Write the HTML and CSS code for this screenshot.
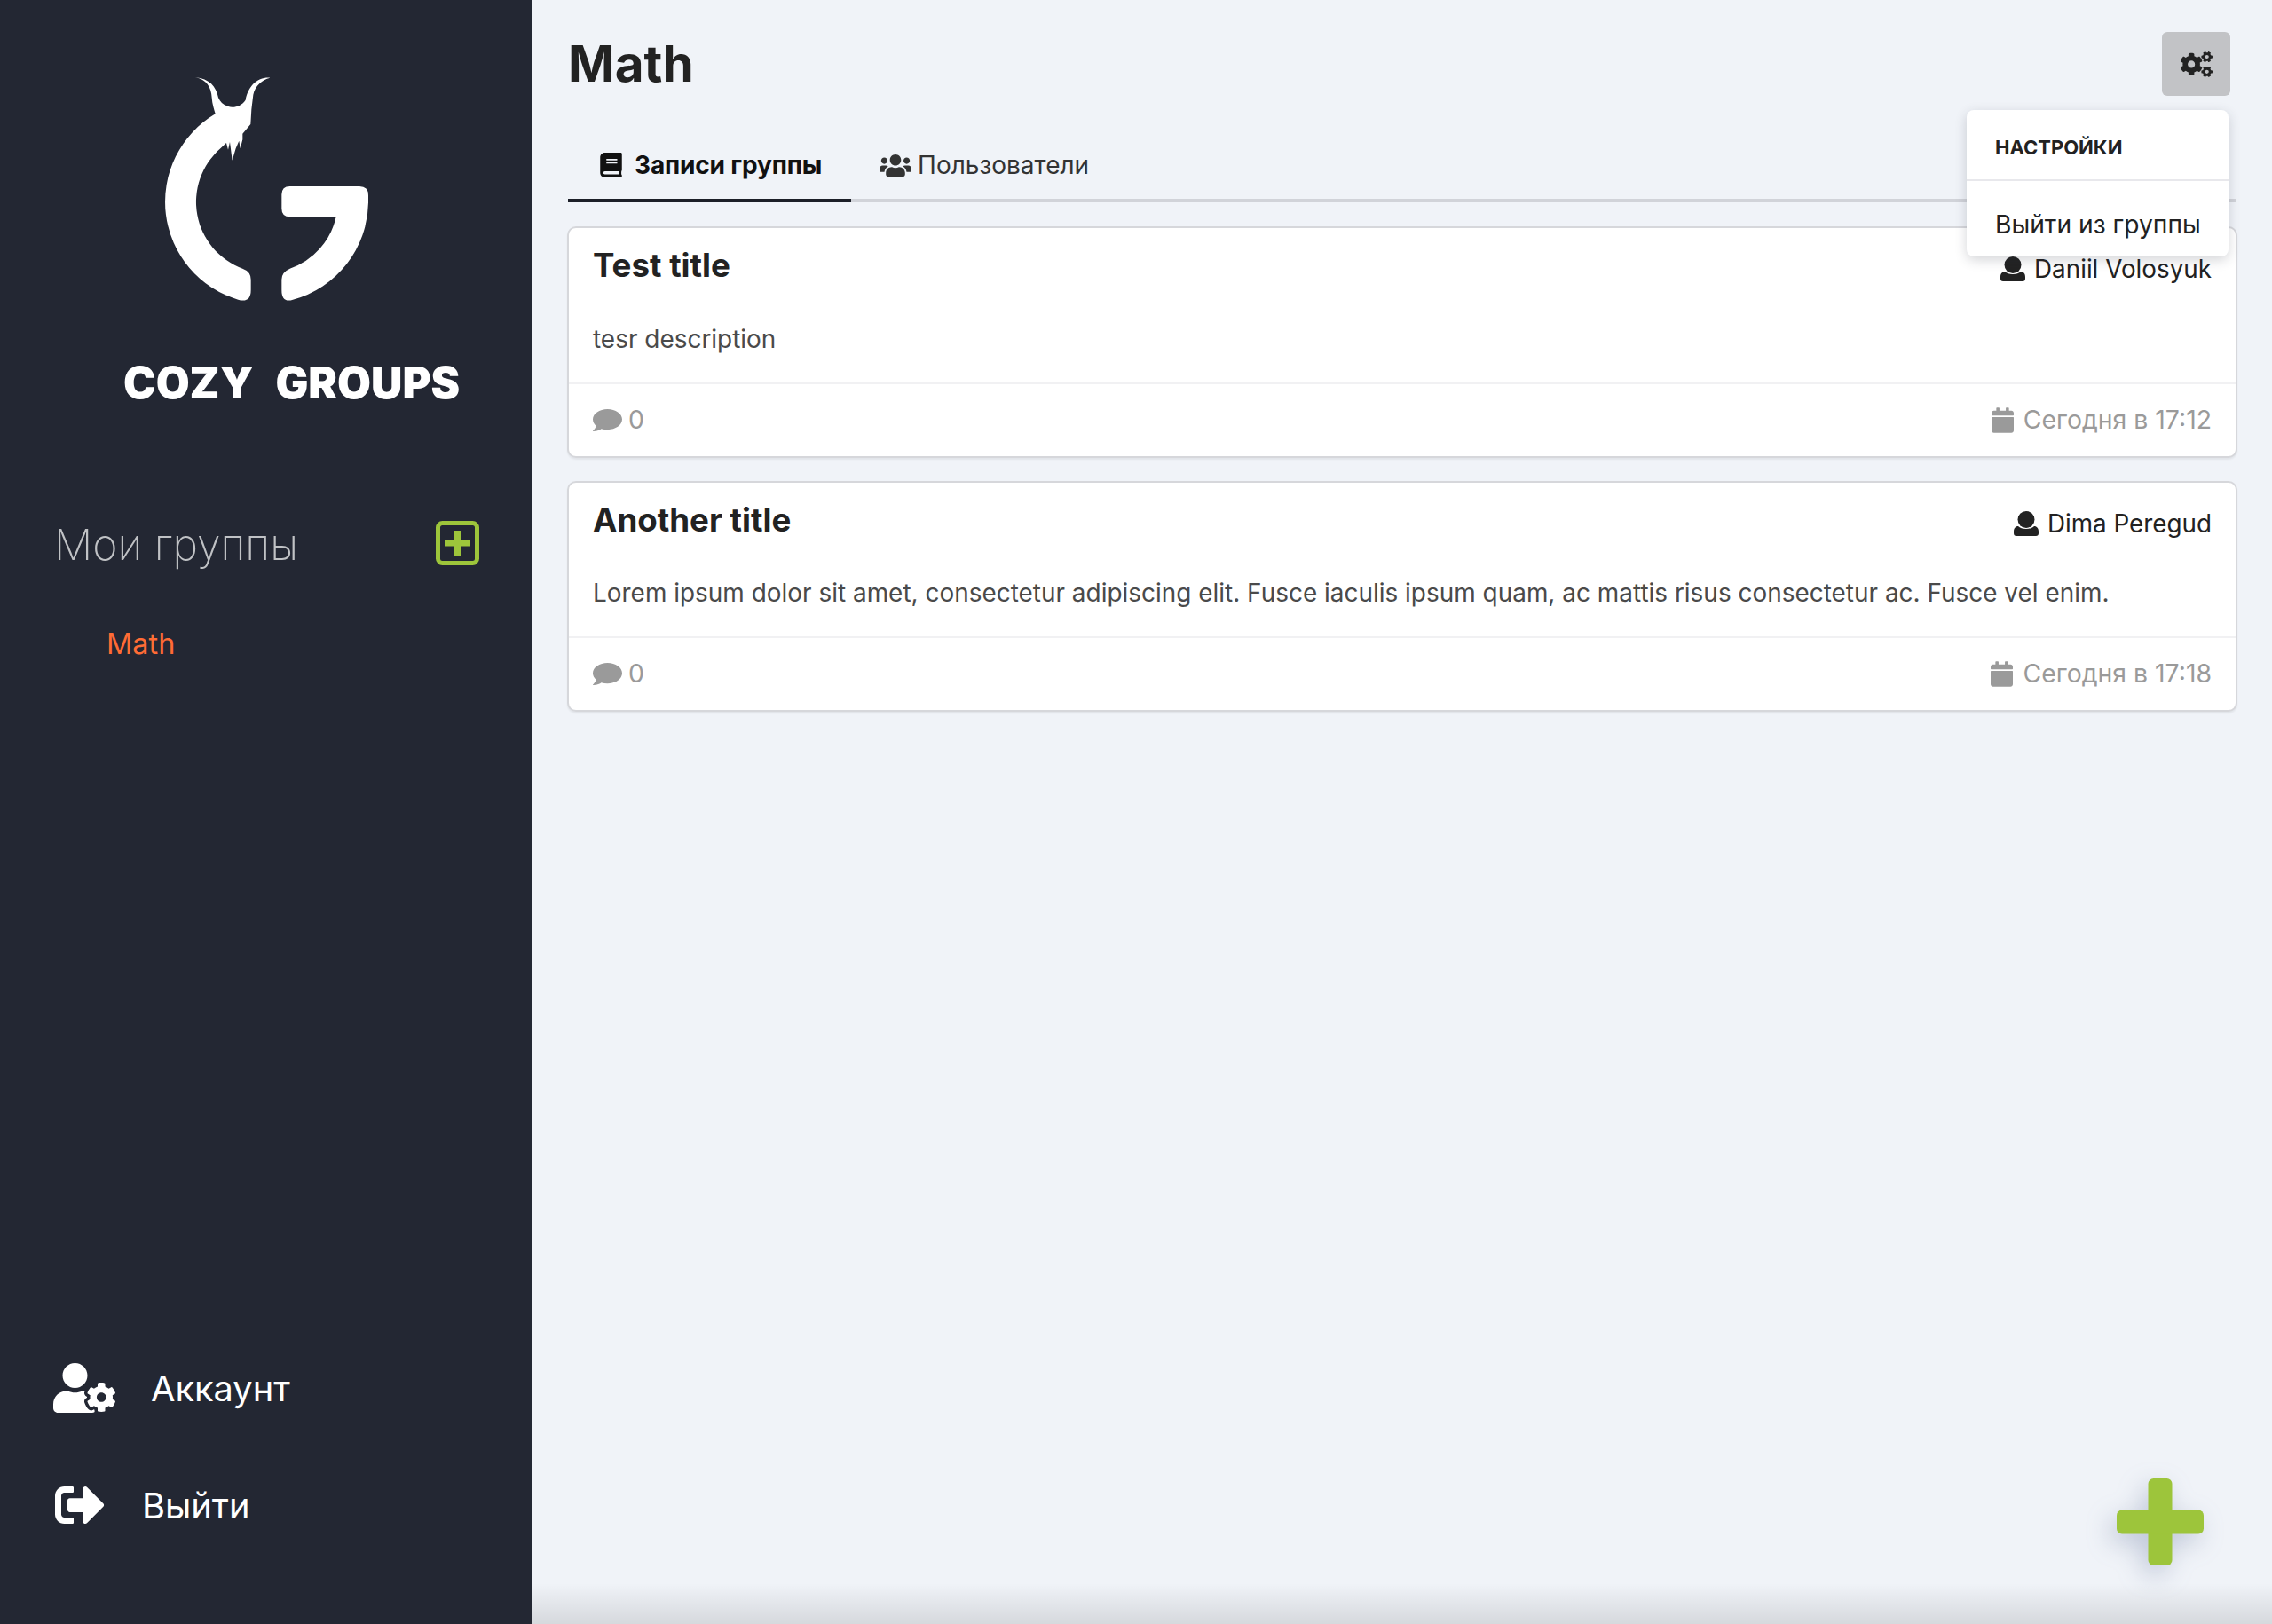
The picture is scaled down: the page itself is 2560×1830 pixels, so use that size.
FILE: index.html
```html
<!DOCTYPE html>
<html lang="ru">
<head>
<meta charset="utf-8">
<title>Cozy Groups</title>
<link rel="stylesheet" href="styles.css">
</head>
<body>
<div class="app">
  <aside class="sidebar">
    <svg class="logo-mark" viewBox="0 0 1440 900" aria-hidden="true">
      <path fill="#fff" d="M360 82C398 88 414 115 416 150C417 172 424 190 428 205A345 345 0 0 0 505 833Q548 845 548 800L548 765Q548 738 520 728A240 240 0 0 1 445 322L465 303L471 326L477 300L485 362L497 322L508 296L512 322L520 292L520 272L547 240L550 190L556 140C562 110 585 90 613 83C570 80 540 110 530 158C518 176 498 183 484 182C462 180 446 170 438 150C430 112 408 86 360 82Z"/>
      <path fill="#fff" d="M680 450L915 450Q945 450 945 480L945 505A345 345 0 0 1 690 833Q652 845 652 800L652 765Q652 740 680 728A240 240 0 0 0 836 553L680 553Q652 553 652 525L652 478Q652 450 680 450Z"/>
    </svg>
    <div class="logo-text">COZY GROUPS</div>
    <div class="groups-head">
      <span class="groups-title">Мои группы</span>
      <svg class="groups-add" viewBox="0 0 49 50" aria-hidden="true">
        <rect x="2.5" y="2.5" width="44" height="45" rx="5" fill="none" stroke="#9dc53b" stroke-width="5"/>
        <rect x="10" y="21.500" width="29" height="7" fill="#9dc53b"/>
        <rect x="21" y="11" width="7" height="28" fill="#9dc53b"/>
      </svg>
    </div>
    <a class="group-link">Math</a>
    <nav class="side-nav">
      <a class="side-link">
        <svg class="side-icon side-icon--account" viewBox="0 0 640 512" aria-hidden="true"><path fill="#fff" d="M610.5 373.3c2.6-14.1 2.6-28.5 0-42.6l25.8-14.9c3-1.7 4.3-5.2 3.3-8.5-6.7-21.6-18.2-41.2-33.2-57.4-2.3-2.5-6-3.1-9-1.4l-25.8 14.9c-10.9-9.3-23.4-16.5-36.9-21.3v-29.8c0-3.4-2.4-6.4-5.7-7.1-22.3-5-45-4.8-66.2 0-3.3.7-5.7 3.7-5.7 7.1v29.8c-13.5 4.8-26 12-36.9 21.3l-25.8-14.9c-2.9-1.7-6.7-1.1-9 1.4-15 16.2-26.5 35.8-33.2 57.4-1 3.3.4 6.8 3.3 8.5l25.8 14.9c-2.6 14.1-2.6 28.5 0 42.6l-25.8 14.9c-3 1.7-4.3 5.2-3.3 8.5 6.7 21.6 18.2 41.1 33.2 57.4 2.3 2.5 6 3.1 9 1.4l25.8-14.9c10.9 9.3 23.4 16.5 36.9 21.3v29.8c0 3.4 2.4 6.4 5.7 7.1 22.3 5 45 4.8 66.2 0 3.3-.7 5.7-3.7 5.7-7.1v-29.8c13.5-4.8 26-12 36.9-21.3l25.8 14.9c2.9 1.7 6.7 1.1 9-1.4 15-16.2 26.5-35.8 33.2-57.4 1-3.3-.4-6.8-3.3-8.5l-25.8-14.9zM496 400.5c-26.8 0-48.5-21.8-48.5-48.5s21.8-48.5 48.5-48.5 48.5 21.8 48.5 48.5-21.7 48.5-48.5 48.5zM224 256c70.7 0 128-57.3 128-128S294.7 0 224 0 96 57.3 96 128s57.3 128 128 128zm201.2 226.5c-2.3-1.2-4.6-2.6-6.8-3.9l-7.9 4.6c-6 3.4-12.8 5.3-19.6 5.3-10.9 0-21.4-4.6-28.9-12.6-18.3-19.8-32.3-43.9-40.2-69.6-5.5-17.7 1.9-36.4 17.9-45.7l7.9-4.6c-.1-2.6-.1-5.2 0-7.8l-7.9-4.6c-16-9.2-23.4-28-17.9-45.7.9-2.9 2.2-5.8 3.2-8.7-3.8-.3-7.5-1.2-11.4-1.2h-16.7c-22.2 10.2-46.9 16-72.9 16s-50.6-5.8-72.9-16h-16.7C60.2 288 0 348.2 0 422.4V464c0 26.5 21.5 48 48 48h352c10.1 0 19.5-3.2 27.2-8.5-1.2-3.8-2-7.7-2-11.8v-9.2z"/></svg>
        <span class="side-label">Аккаунт</span>
      </a>
      <a class="side-link">
        <svg class="side-icon side-icon--logout" viewBox="0 0 512 512" aria-hidden="true"><path fill="#fff" d="M497 273L329 441c-15 15-41 4.500-41-17v-96H152c-13.300 0-24-10.700-24-24v-96c0-13.300 10.700-24 24-24h136V88c0-21.400 25.900-32 41-17l168 168c9.300 9.400 9.300 24.600 0 34zM192 436v-40c0-6.600-5.400-12-12-12H96c-17.700 0-32-14.300-32-32V160c0-17.700 14.300-32 32-32h84c6.600 0 12-5.400 12-12V76c0-6.600-5.400-12-12-12H96c-53 0-96 43-96 96v192c0 53 43 96 96 96h84c6.600 0 12-5.400 12-12z"/></svg>
        <span class="side-label">Выйти</span>
      </a>
    </nav>
  </aside>

  <main class="main">
    <header class="page-head">
      <h1 class="page-title">Math</h1>
      <button class="settings-btn" type="button" aria-label="Настройки">
        <svg class="settings-icon" viewBox="0 0 640 512" aria-hidden="true"><path fill="#222" d="M512.100 191l-8.200 14.300c-3 5.300-9.400 7.500-15.100 5.400-11.800-4.400-22.600-10.700-32.100-18.600-4.600-3.800-5.800-10.500-2.800-15.700l8.200-14.300c-6.900-8-12.300-17.300-15.900-27.400h-16.500c-6 0-11.200-4.300-12.200-10.300-2-12-2.100-24.600 0-37.100 1-6 6.200-10.400 12.200-10.400h16.500c3.600-10.100 9-19.400 15.900-27.400l-8.200-14.300c-3-5.200-1.900-11.900 2.800-15.700 9.500-7.900 20.400-14.200 32.100-18.600 5.700-2.100 12.100.1 15.100 5.400l8.200 14.300c10.500-1.900 21.200-1.900 31.700 0L552 6.300c3-5.300 9.400-7.500 15.100-5.400 11.800 4.400 22.600 10.700 32.100 18.600 4.600 3.800 5.800 10.500 2.800 15.700l-8.200 14.300c6.900 8 12.300 17.300 15.900 27.400h16.500c6 0 11.200 4.300 12.200 10.300 2 12 2.100 24.600 0 37.100-1 6-6.200 10.400-12.200 10.400h-16.500c-3.600 10.100-9 19.400-15.900 27.400l8.200 14.300c3 5.200 1.900 11.900-2.800 15.700-9.500 7.900-20.400 14.200-32.100 18.600-5.700 2.100-12.100-.1-15.100-5.400l-8.200-14.300c-10.400 1.900-21.200 1.900-31.700 0zm-10.500-58.800c38.500 29.600 82.400-14.300 52.800-52.800-38.500-29.700-82.400 14.300-52.800 52.800zM386.300 286.100l33.700 16.800c10.100 5.800 14.500 18.100 10.500 29.100-8.900 24.200-26.400 46.400-42.600 65.800-7.400 8.900-20.200 11.100-30.300 5.300l-29.100-16.800c-16 13.700-34.600 24.600-54.900 31.700v33.600c0 11.600-8.300 21.600-19.700 23.600-24.600 4.200-50.400 4.400-75.900 0-11.500-2-20-11.900-20-23.600V418c-20.300-7.200-38.900-18-54.900-31.700L74 403c-10 5.800-22.900 3.600-30.300-5.300-16.200-19.400-33.300-41.600-42.200-65.700-4-10.900.4-23.200 10.500-29.100l33.300-16.800c-3.900-20.900-3.900-42.400 0-63.400L12 205.800c-10.100-5.800-14.600-18.100-10.500-29 8.900-24.200 26-46.400 42.200-65.800 7.400-8.900 20.200-11.100 30.300-5.300l29.100 16.800c16-13.700 34.600-24.600 54.900-31.700V57.100c0-11.500 8.200-21.500 19.600-23.500 24.600-4.200 50.500-4.400 76-.1 11.500 2 20 11.900 20 23.600v33.600c20.300 7.200 38.900 18 54.900 31.700l29.100-16.800c10-5.800 22.900-3.600 30.300 5.300 16.200 19.400 33.200 41.600 42.100 65.800 4 10.900.1 23.200-10 29.100l-33.700 16.800c3.900 21 3.900 42.500 0 63.500zm-117.600 21.100c59.200-77-28.700-164.900-105.700-105.700-59.200 77 28.700 164.900 105.700 105.700zm243.400 182.700l-8.200 14.300c-3 5.300-9.400 7.500-15.100 5.400-11.800-4.400-22.600-10.700-32.100-18.600-4.600-3.800-5.800-10.500-2.800-15.700l8.200-14.300c-6.900-8-12.300-17.300-15.900-27.400h-16.500c-6 0-11.200-4.300-12.200-10.300-2-12-2.100-24.600 0-37.100 1-6 6.200-10.400 12.200-10.400h16.500c3.600-10.100 9-19.400 15.900-27.400l-8.200-14.300c-3-5.200-1.900-11.900 2.800-15.700 9.500-7.900 20.400-14.200 32.100-18.600 5.700-2.100 12.100.1 15.100 5.400l8.200 14.300c10.500-1.900 21.200-1.900 31.700 0l8.200-14.300c3-5.300 9.400-7.500 15.100-5.400 11.800 4.400 22.600 10.700 32.100 18.600 4.600 3.800 5.800 10.500 2.800 15.700l-8.200 14.300c6.900 8 12.300 17.300 15.900 27.400h16.500c6 0 11.200 4.300 12.200 10.300 2 12 2.100 24.600 0 37.100-1 6-6.200 10.400-12.200 10.400h-16.500c-3.600 10.100-9 19.400-15.900 27.400l8.200 14.300c3 5.200 1.900 11.900-2.800 15.700-9.500 7.900-20.400 14.200-32.100 18.600-5.700 2.100-12.100-.1-15.100-5.400l-8.200-14.300c-10.400 1.900-21.200 1.900-31.700 0zM501.600 431c38.500 29.600 82.400-14.300 52.800-52.800-38.500-29.600-82.400 14.300-52.800 52.800z"/></svg>
      </button>
    </header>

    <div class="tabs">
      <a class="tab tab--active">
        <svg class="tab-icon tab-icon--book" viewBox="0 0 448 512" aria-hidden="true"><path fill="#111" d="M448 360V24c0-13.300-10.700-24-24-24H96C43 0 0 43 0 96v320c0 53 43 96 96 96h328c13.300 0 24-10.700 24-24v-16c0-7.500-3.500-14.300-8.900-18.700-4.200-15.400-4.200-59.300 0-74.700 5.400-4.300 8.900-11.100 8.900-18.600zM128 134c0-3.300 2.700-6 6-6h212c3.300 0 6 2.700 6 6v20c0 3.300-2.700 6-6 6H134c-3.300 0-6-2.700-6-6v-20zm0 64c0-3.300 2.700-6 6-6h212c3.300 0 6 2.700 6 6v20c0 3.300-2.700 6-6 6H134c-3.300 0-6-2.700-6-6v-20zm253.400 250H96c-17.700 0-32-14.300-32-32 0-17.600 14.400-32 32-32h285.400c-1.900 17.100-1.900 46.900 0 64z"/></svg>
        <span>Записи группы</span>
      </a>
      <a class="tab">
        <svg class="tab-icon tab-icon--users" viewBox="0 0 640 512" aria-hidden="true"><path fill="#333" d="M96 224c35.300 0 64-28.700 64-64s-28.700-64-64-64-64 28.700-64 64 28.700 64 64 64zm448 0c35.300 0 64-28.700 64-64s-28.700-64-64-64-64 28.700-64 64 28.700 64 64 64zm32 32h-64c-17.600 0-33.500 7.100-45.100 18.600 40.300 22.100 68.900 62 75.100 109.400h66c17.700 0 32-14.300 32-32v-32c0-35.300-28.700-64-64-64zm-256 0c61.900 0 112-50.100 112-112S381.900 32 320 32 208 82.100 208 144s50.100 112 112 112zm76.800 32h-8.300c-20.800 10-43.900 16-68.500 16s-47.600-6-68.500-16h-8.300C179.600 288 128 339.600 128 403.200V432c0 26.500 21.500 48 48 48h288c26.500 0 48-21.500 48-48v-28.800c0-63.600-51.600-115.200-115.200-115.200zm-223.700-13.400C161.500 263.100 145.600 256 128 256H64c-35.300 0-64 28.700-64 64v32c0 17.700 14.300 32 32 32h65.900c6.300-47.400 34.900-87.300 75.200-109.400z"/></svg>
        <span>Пользователи</span>
      </a>
    </div>

    <div class="posts">
      <article class="card card--first">
        <div class="card-body">
          <div class="card-head">
            <h2 class="card-title">Test title</h2>
            <div class="card-author">
              <svg class="user-icon" viewBox="0 0 28 28" aria-hidden="true"><circle cx="14" cy="9.500" r="9.500" fill="#222"/><path fill="#222" d="M5 17c2 2 5 3 9 3s7-1 9-3c3 0 5 2.500 5 6v2a3 3 0 0 1-3 3H3a3 3 0 0 1-3-3v-2c0-3.500 2-6 5-6z"/></svg>
              <span>Daniil Volosyuk</span>
            </div>
          </div>
          <p class="card-text">tesr description</p>
        </div>
        <div class="card-foot">
          <div class="foot-item">
            <svg class="comment-icon" viewBox="0 32 512 448" preserveAspectRatio="none" aria-hidden="true"><path fill="#9a9a9a" d="M256 32C114.600 32 0 125.100 0 240c0 49.600 21.400 95 57 130.700C44.500 421.100 2.700 466 2.200 466.500c-2.200 2.300-2.800 5.700-1.500 8.700S4.800 480 8 480c66.300 0 116-31.800 140.600-51.400 32.700 12.300 69 19.400 107.400 19.400 141.400 0 256-93.100 256-208S397.400 32 256 32z"/></svg>
            <span>0</span>
          </div>
          <div class="foot-item foot-item--date">
            <svg class="calendar-icon" viewBox="0 0 448 512" aria-hidden="true"><path fill="#9a9a9a" d="M12 192h424c6.600 0 12 5.400 12 12v260c0 26.500-21.500 48-48 48H48c-26.500 0-48-21.500-48-48V204c0-6.600 5.400-12 12-12zm436-44v-36c0-26.500-21.500-48-48-48h-48V12c0-6.600-5.400-12-12-12h-40c-6.600 0-12 5.400-12 12v52H160V12c0-6.600-5.400-12-12-12h-40c-6.600 0-12 5.400-12 12v52H48C21.500 64 0 85.500 0 112v36c0 6.600 5.400 12 12 12h424c6.600 0 12-5.400 12-12z"/></svg>
            <span>Сегодня в 17:12</span>
          </div>
        </div>
      </article>

      <article class="card">
        <div class="card-body">
          <div class="card-head">
            <h2 class="card-title">Another title</h2>
            <div class="card-author">
              <svg class="user-icon" viewBox="0 0 28 28" aria-hidden="true"><circle cx="14" cy="9.500" r="9.500" fill="#222"/><path fill="#222" d="M5 17c2 2 5 3 9 3s7-1 9-3c3 0 5 2.500 5 6v2a3 3 0 0 1-3 3H3a3 3 0 0 1-3-3v-2c0-3.500 2-6 5-6z"/></svg>
              <span>Dima Peregud</span>
            </div>
          </div>
          <p class="card-text">Lorem ipsum dolor sit amet, consectetur adipiscing elit. Fusce iaculis ipsum quam, ac mattis risus consectetur ac. Fusce vel enim.</p>
        </div>
        <div class="card-foot">
          <div class="foot-item">
            <svg class="comment-icon" viewBox="0 32 512 448" preserveAspectRatio="none" aria-hidden="true"><path fill="#9a9a9a" d="M256 32C114.600 32 0 125.100 0 240c0 49.600 21.400 95 57 130.700C44.500 421.100 2.700 466 2.200 466.500c-2.200 2.300-2.800 5.700-1.500 8.700S4.800 480 8 480c66.300 0 116-31.800 140.600-51.400 32.700 12.300 69 19.400 107.400 19.400 141.400 0 256-93.100 256-208S397.400 32 256 32z"/></svg>
            <span>0</span>
          </div>
          <div class="foot-item foot-item--date">
            <svg class="calendar-icon" viewBox="0 0 448 512" aria-hidden="true"><path fill="#9a9a9a" d="M12 192h424c6.600 0 12 5.400 12 12v260c0 26.500-21.500 48-48 48H48c-26.500 0-48-21.500-48-48V204c0-6.600 5.400-12 12-12zm436-44v-36c0-26.500-21.500-48-48-48h-48V12c0-6.600-5.400-12-12-12h-40c-6.600 0-12 5.400-12 12v52H160V12c0-6.600-5.400-12-12-12h-40c-6.600 0-12 5.400-12 12v52H48C21.500 64 0 85.500 0 112v36c0 6.600 5.400 12 12 12h424c6.600 0 12-5.400 12-12z"/></svg>
            <span>Сегодня в 17:18</span>
          </div>
        </div>
      </article>
    </div>

    <div class="dropdown">
      <div class="dropdown-head">НАСТРОЙКИ</div>
      <a class="dropdown-item">Выйти из группы</a>
    </div>

    <svg class="fab" viewBox="0 0 98 98" aria-label="Добавить">
      <rect x="35.500" y="0" width="27" height="98" rx="6" fill="#9dc53b"/>
      <rect x="0" y="35.500" width="98" height="27" rx="6" fill="#9dc53b"/>
    </svg>
  </main>
</div>
</body>
</html>
```

FILE: styles.css
```css
* { box-sizing: border-box; }

html, body {
  margin: 0;
  height: 100%;
}

body {
  font-family: "Inter", "Liberation Sans", sans-serif;
  color: #222;
  background: #f0f3f8;
}

.app {
  display: flex;
  height: 1830px;
  overflow: hidden;
}

/* Sidebar */
.sidebar {
  width: 600px;
  flex: none;
  display: flex;
  flex-direction: column;
  padding: 60px 0 110px;
  background: #232733;
  color: #fff;
}

.logo-mark {
  display: block;
  width: 480px;
  height: 300px;
  margin-left: 100px;
}

.logo-text {
  margin: 42px 0 -2px 139px;
  font-size: 49px;
  font-weight: 900;
  line-height: 60px;
  word-spacing: 15px;
  white-space: nowrap;
}

.groups-head {
  display: flex;
  align-items: center;
  justify-content: space-between;
  margin-top: 124px;
  padding: 0 60px 0 61px;
}

.groups-title {
  font-size: 48.2px;
  font-weight: 200;
  line-height: 60px;
  color: #c0c2c5;
}

.groups-add {
  width: 49px;
  height: 50px;
  margin-bottom: 4px;
}

.group-link {
  margin: 62px 0 0 120px;
  font-size: 32.5px;
  line-height: 40px;
  color: #ff6b35;
}

.side-nav {
  margin-top: auto;
  display: flex;
  flex-direction: column;
  gap: 84px;
  padding-left: 60px;
}

.side-link {
  display: flex;
  align-items: center;
  height: 48px;
  font-size: 39.8px;
  line-height: 48px;
  color: #fff;
}

.side-label { margin-top: 2px; }

.side-icon { flex: none; }

.side-icon--account {
  width: 70px;
  height: 56px;
  margin-right: 40px;
}

.side-icon--logout {
  width: 56px;
  height: 56px;
  margin: 0 42px 0 2px;
}

/* Main */
.main {
  position: relative;
  flex: 1;
  min-width: 0;
  padding: 36px 39px 0;
}

.main::after {
  content: "";
  position: absolute;
  left: 0;
  right: 0;
  bottom: 0;
  height: 46px;
  background: linear-gradient(to bottom, rgba(0, 0, 0, 0), rgba(0, 0, 0, .11));
  pointer-events: none;
}

.page-head {
  display: flex;
  align-items: center;
  justify-content: space-between;
  height: 72px;
  padding-right: 8px;
}

.page-title {
  margin: 0 0 0 1px;
  font-size: 56.6px;
  font-weight: 700;
  line-height: 72px;
  color: #222;
}

.settings-btn {
  display: flex;
  align-items: center;
  justify-content: center;
  width: 77px;
  height: 72px;
  padding: 0;
  border: 0;
  border-radius: 6px;
  background: #c2c3c6;
}

.settings-icon {
  width: 36px;
  height: 29px;
}

.tabs {
  display: flex;
  margin: 49px 1px 0;
  border-bottom: 4px solid #d1d3d9;
}

.tab {
  display: flex;
  align-items: center;
  padding: 9px 33px 18px 36px;
  margin-bottom: -4px;
  border-bottom: 4px solid transparent;
  font-size: 28px;
  line-height: 40px;
  color: #333;
}

.tab--active {
  padding-right: 33px;
  font-weight: 700;
  letter-spacing: -.17px;
  color: #111;
  border-bottom-color: #1c1f28;
}

.tab-icon { flex: none; }

.tab-icon--book {
  width: 25px;
  height: 28px;
  margin-right: 14px;
}

.tab-icon--users {
  width: 36px;
  height: 29px;
  margin-right: 7px;
}

.tab:not(.tab--active) { padding-left: 32px; }

.posts {
  display: flex;
  flex-direction: column;
  gap: 26px;
  margin-top: 27px;
}

.card {
  background: #fff;
  border: 2px solid #d6d7db;
  border-radius: 10px;
  box-shadow: 0 2px 2px rgba(0, 0, 0, .06);
}

.card-body {
  padding: 20px 27px 29px;
  border-bottom: 2px solid #f1f1f3;
}

.card-head {
  display: flex;
  align-items: flex-start;
  justify-content: space-between;
  height: 44px;
}

.card-title {
  margin: 0;
  font-size: 36.7px;
  font-weight: 700;
  line-height: 44px;
  color: #222;
}

.card-author {
  display: flex;
  align-items: center;
  gap: 10px;
  margin-top: 6px;
  font-size: 27.8px;
  line-height: 40px;
  color: #222;
}

.user-icon {
  width: 28px;
  height: 28px;
  flex: none;
}

.card-text {
  margin: 40px 0 0;
  font-size: 27.95px;
  line-height: 40px;
  color: #4a4a4a;
}

.card--first .card-text { margin-top: 41px; }

.card-foot {
  display: flex;
  justify-content: space-between;
  padding: 20px 27px 21px;
}

.foot-item {
  display: flex;
  align-items: center;
  font-size: 28.4px;
  line-height: 40px;
  color: #9a9a9a;
}

.comment-icon {
  width: 33px;
  height: 25px;
  margin-right: 7px;
  flex: none;
}

.calendar-icon {
  width: 25px;
  height: 29px;
  margin-right: 11px;
  flex: none;
}

/* Dropdown over the content */
.dropdown {
  position: absolute;
  top: 124px;
  right: 49px;
  width: 295px;
  background: #fff;
  border-radius: 8px;
  box-shadow: 0 4px 14px rgba(40, 45, 60, .2);
}

.dropdown-head {
  padding: 27px 32px 21px;
  font-size: 22px;
  font-weight: 700;
  line-height: 30px;
  border-bottom: 2px solid #e8e8ec;
  white-space: nowrap;
}

.dropdown-item {
  display: block;
  padding: 29px 32px 16px;
  font-size: 28.2px;
  line-height: 40px;
  white-space: nowrap;
  color: #222;
}

/* Floating add button */
.fab {
  position: absolute;
  right: 77px;
  bottom: 66px;
  width: 98px;
  height: 98px;
  filter: drop-shadow(-6px 10px 14px rgba(90, 110, 150, .32));
}
```
